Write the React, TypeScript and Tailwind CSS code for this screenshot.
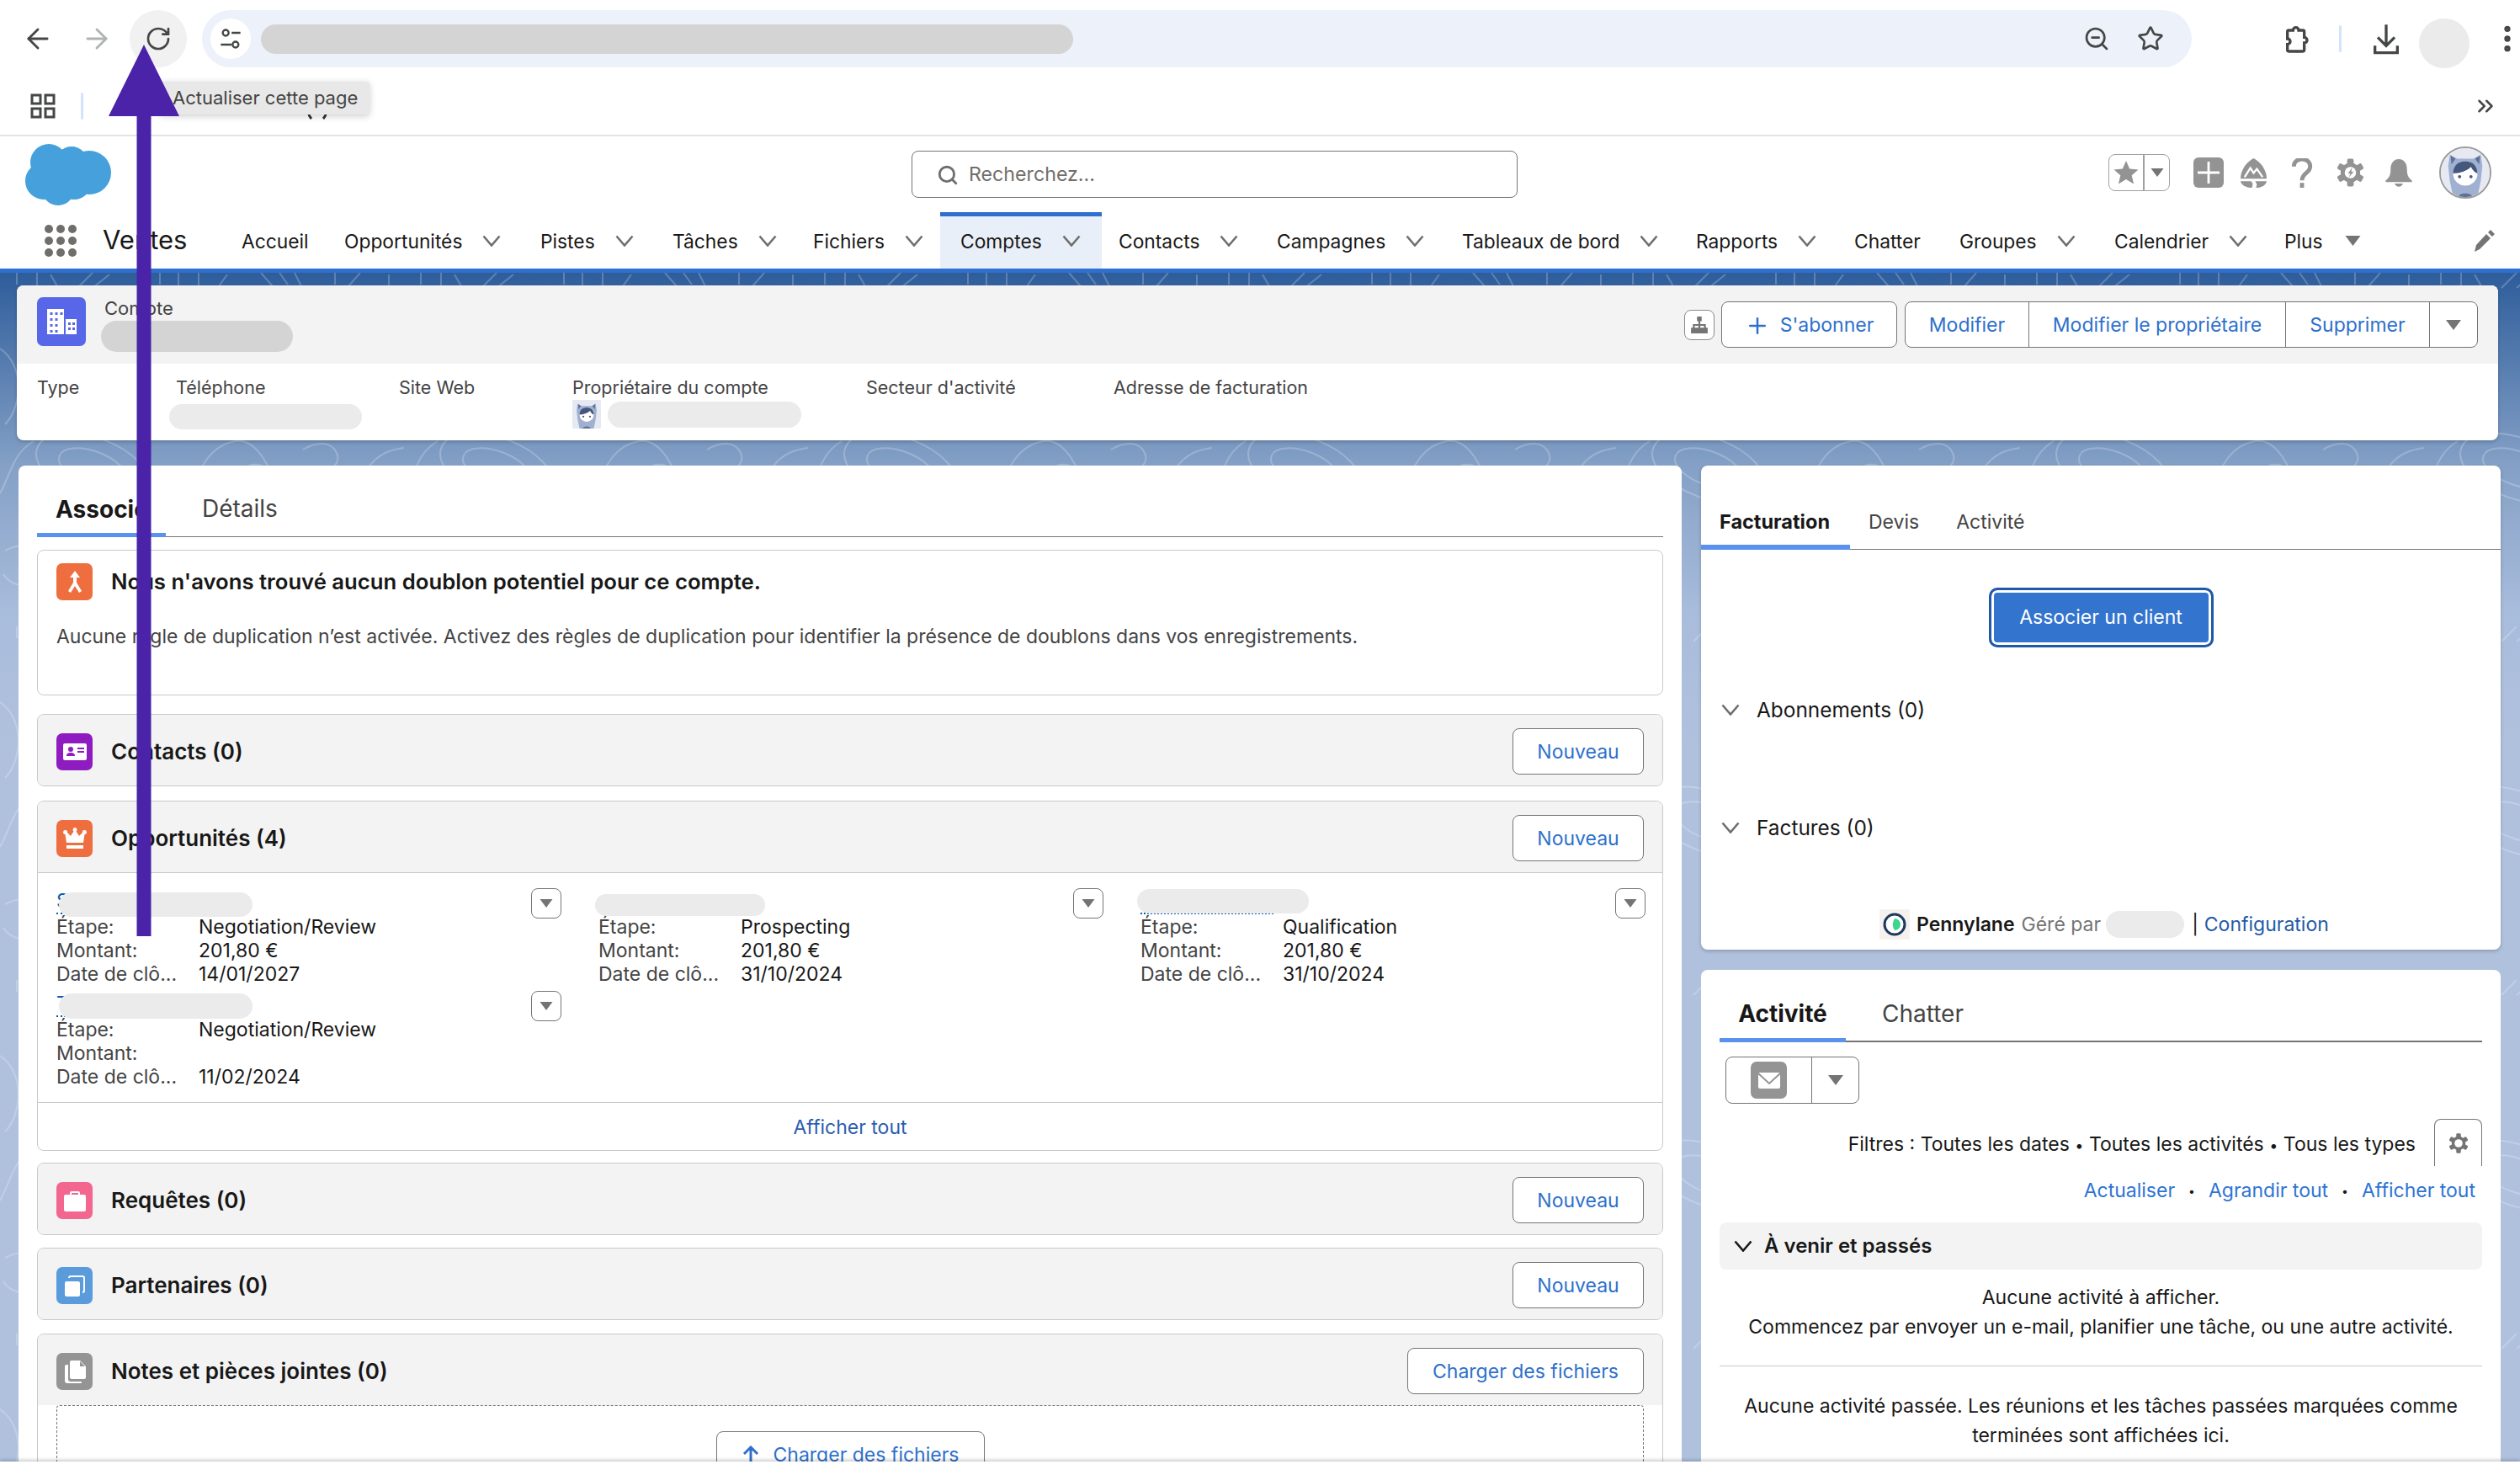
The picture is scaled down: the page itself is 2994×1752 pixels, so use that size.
import { ArrowLeft, ArrowRight, ChevronsRight, EllipsisVertical, Plus, RotateCw, Search, Star, ZoomOut } from 'lucide-react'
import type { ReactNode } from 'react'

const navItems = [
	{ label: 'Accueil', width: 'w-[122px]' },
	{ label: 'Opportunités', width: 'w-[233px]', chevron: true },
	{ label: 'Pistes', width: 'w-[157px]', chevron: true },
	{ label: 'Tâches', width: 'w-[167px]', chevron: true },
	{ label: 'Fichiers', width: 'w-[175px]', chevron: true },
	{ label: 'Comptes', width: 'w-[188px]', chevron: true, active: true },
	{ label: 'Contacts', width: 'w-[188px]', chevron: true },
	{ label: 'Campagnes', width: 'w-[220px]', chevron: true },
	{ label: 'Tableaux de bord', width: 'w-[278px]', chevron: true },
	{ label: 'Rapports', width: 'w-[188px]', chevron: true },
	{ label: 'Chatter', width: 'w-[125px]' },
	{ label: 'Groupes', width: 'w-[184px]', chevron: true },
	{ label: 'Calendrier', width: 'w-[202px]', chevron: true },
]

function Chevron({ color = '#706e6b' }: { color?: string }) {
	return (
		<svg viewBox="0 0 22 14" className="h-[14px] w-[22px]" fill="none" stroke={color} strokeWidth="2.6">
			<path d="M1.5 1.5 11 12.5 20.5 1.5" />
		</svg>
	)
}

function Caret({ className = 'h-[12px] w-[18px]' }: { className?: string }) {
	return (
		<svg viewBox="0 0 18 12" className={className} fill="#747474">
			<path d="M0 0h18L9 12z" />
		</svg>
	)
}

function Gear({ className, color, children }: { className: string; color: string; children?: ReactNode }) {
	return (
		<svg viewBox="0 0 32 34" className={className}>
			<g fill={color}>
				<circle cx="16" cy="17" r="12" />
				{[0, 60, 120, 180, 240, 300].map((angle) => (
					<rect key={angle} x="12" y="0" width="8" height="10" rx="2" transform={`rotate(${angle} 16 17)`} />
				))}
			</g>
			<circle cx="16" cy="17" r="7" fill="#fff" />
			{children}
		</svg>
	)
}

function Cloud() {
	return (
		<svg viewBox="0 0 104 73" className="h-[73px] w-[104px]" fill="#45a0dc">
			<circle cx="30" cy="22" r="22" />
			<circle cx="57" cy="22" r="19" />
			<circle cx="78" cy="34" r="26" />
			<circle cx="24" cy="44" r="22" />
			<circle cx="41" cy="54" r="19" />
			<circle cx="60" cy="46" r="20" />
		</svg>
	)
}

function AppDots() {
	return (
		<svg viewBox="0 0 38 38" className="h-[38px] w-[38px]" fill="#706e6b">
			{[5, 19, 33].flatMap((y) =>
				[5, 19, 33].map((x) => <circle key={`${x}-${y}`} cx={x} cy={y} r="5" />)
			)}
		</svg>
	)
}

function Astro({ className }: { className: string }) {
	return (
		<svg viewBox="0 0 60 60" className={className}>
			<rect width="60" height="60" fill="#e6e9f2" />
			<path d="M11 8l9 5h20l9-5 2 14-2 18-4 20H15l-4-20-2-18z" fill="#9fb0d0" />
			<path d="M12 9l6 4-5 7zM48 9l-6 4 5 7z" fill="#5f7196" />
			<circle cx="30" cy="31" r="15" fill="#fff" />
			<path d="M15 31c0-10 7-15 15-15s15 5 15 15c-3-1-6-4-8-8-5 5-14 8-22 8z" fill="#45577d" />
			<circle cx="23" cy="35" r="2" fill="#45577d" />
			<circle cx="37" cy="35" r="2" fill="#45577d" />
			<path d="M21 60c2-6 16-6 18 0z" fill="#5f7196" />
		</svg>
	)
}

function UtilityIcons() {
	return (
		<div className="flex items-center">
			<div className="flex h-[44px] w-[73px] items-center rounded-[8px] border border-[#a0a0a0]">
				<svg viewBox="0 0 30 30" className="ml-[5px] h-[30px] w-[30px]" fill="#939393">
					<path d="M15 1l4.2 9.4 10.3 1-7.8 6.8 2.4 10.2L15 23l-9.1 5.4 2.4-10.2L.5 11.4l10.3-1z" />
				</svg>
				<div className="ml-[5px] h-full w-[2px] bg-[#a0a0a0]" />
				<Caret className="ml-[7px] h-[10px] w-[16px]" />
			</div>
			<div className="ml-[28px] flex h-[36px] w-[36px] items-center justify-center rounded-[6px] bg-[#939393]">
				<svg viewBox="0 0 24 24" className="h-[26px] w-[26px]" stroke="#fff" strokeWidth="2.6">
					<path d="M12 0v24M0 12h24" />
				</svg>
			</div>
			<svg viewBox="0 0 36 36" className="ml-[18px] h-[35px] w-[35px]" fill="#939393">
				<path d="M18 0C26 4 34 14 34 25H2C2 14 10 4 18 0z" />
				<path d="M7 23l7-11 4 6 4-5 7 10" fill="none" stroke="#fff" strokeWidth="2.4" />
				<path d="M2 28h13l2 3-1 5C9 36 3 33 2 28zM20 28h14c-1 5-6 8-13 8l1-4z" />
			</svg>
			<svg viewBox="0 0 26 36" className="ml-[27px] h-[35px] w-[26px]" fill="none" stroke="#939393" strokeWidth="5">
				<path d="M3 10c0-12 20-12 20 0 0 8-10 8-10 17" />
				<path d="M13 30v6" />
			</svg>
			<Gear className="ml-[29px] h-[34px] w-[31px]" color="#939393">
				<path d="M18 11l-5 7h3l-2 5 6-7h-3z" fill="#939393" />
			</Gear>
			<svg viewBox="0 0 34 34" className="ml-[25px] h-[33px] w-[34px]" fill="#939393">
				<path d="M17 0c7 0 10 6 10 12 0 8 2 11 6 14v2H1v-2c4-3 6-6 6-14C7 6 10 0 17 0z" />
				<path d="M12 30h10c-1 5-9 5-10 0z" />
			</svg>
			<div className="ml-[31px] h-[62px] w-[62px] overflow-hidden rounded-full border-2 border-[#9a9a9a]">
				<Astro className="h-full w-full" />
			</div>
		</div>
	)
}

function Contours() {
	return (
		<svg className="absolute top-0 left-0 h-full w-full" fill="none">
			<defs>
				<pattern id="topo" width="480" height="420" patternUnits="userSpaceOnUse">
					<g stroke="#fff" strokeOpacity="0.22" strokeWidth="2">
						<path d="M20 0v14M44 0v20M60 2l8 14M110 0l-18 18M130 2l-20 16M190 0v14M212 0v16M236 0v18M270 2l-10 14M310 0l14 16M332 0l10 14M350 0l8 16M398 0v14M428 0l-14 16M462 2v14" />
						<ellipse cx="110" cy="232" rx="70" ry="36" transform="rotate(20 110 232)" />
						<ellipse cx="110" cy="232" rx="42" ry="20" transform="rotate(20 110 232)" />
						<path d="M0 262c14-26 16-48 40-62M230 262c4-30 22-58 50-62 26-4 42 34 52 62M280 262c0-20 10-36 26-34 16 2 22 20 24 34M360 210c16-10 34-10 40 4 8 18-22 22-14 36M430 262c-4-20 12-50 50-54" />
						<path d="M0 90c30 20 26 70 6 90M474 60c-20 20-24 70-6 96M6 330c26-14 60-4 54 22-4 26-44 26-56 6M420 320c24-12 60 2 58 26-2 22-40 30-60 10" />
					</g>
				</pattern>
			</defs>
			<rect width="100%" height="100%" fill="url(#topo)" />
		</svg>
	)
}

function Pill({ className }: { className: string }) {
	return <div className={`rounded-full ${className}`} />
}

function AccountField({ label, width, children }: { label: string; width: string; children?: ReactNode }) {
	return (
		<div className={`flex flex-col ${width}`}>
			<span className="h-[28px] text-[21.5px] leading-[28px] text-[#444444]">{label}</span>
			{children}
		</div>
	)
}

function OutlineButton({ children, className = '' }: { children: ReactNode; className?: string }) {
	return (
		<div className={`flex h-[55px] items-center justify-center rounded-[8px] border border-[#747474] bg-white pt-[2px] text-[23px] text-[#2e70cc] ${className}`}>
			{children}
		</div>
	)
}

function RecordIcon({ color, children }: { color: string; children: ReactNode }) {
	return (
		<div className={`flex h-[44px] w-[43px] shrink-0 items-center justify-center rounded-[7px] ${color}`}>
			<svg viewBox="0 0 30 30" className="h-[30px] w-[30px]" fill="#fff">
				{children}
			</svg>
		</div>
	)
}

const contactIcon = (
	<path fillRule="evenodd" d="M3 5h24a2 2 0 0 1 2 2v16a2 2 0 0 1-2 2H3a2 2 0 0 1-2-2V7a2 2 0 0 1 2-2zm7 4a3 3 0 1 0 0 6 3 3 0 0 0 0-6zm-5 11h10c0-3-2-4-5-4s-5 1-5 4zm13-10v2h8v-2zm0 4v2h8v-2z" />
)
const crownIcon = (
	<path fillRule="evenodd" d="M15 2a2.5 2.5 0 0 1 1.5 4.5L20 12l4-4a2.5 2.5 0 1 1 2.5 2L25 20H5L3.5 10A2.5 2.5 0 1 1 6 8l4 4 3.5-5.5A2.5 2.5 0 0 1 15 2zM5 23h20v4H5z" />
)
const caseIcon = (
	<path fillRule="evenodd" d="M11 4h8a2 2 0 0 1 2 2v2h5a2 2 0 0 1 2 2v16a2 2 0 0 1-2 2H4a2 2 0 0 1-2-2V10a2 2 0 0 1 2-2h5V6a2 2 0 0 1 2-2zm0 2v2h8V6z" />
)
const partnerIcon = (
	<>
		<path d="M5 10h14a2 2 0 0 1 2 2v14a2 2 0 0 1-2 2H5a2 2 0 0 1-2-2V12a2 2 0 0 1 2-2z" />
		<path d="M10 3h14a3 3 0 0 1 3 3v15a3 3 0 0 1-3 3v-2a1 1 0 0 0 1-1V6a1 1 0 0 0-1-1H10a1 1 0 0 0-1 1H7a3 3 0 0 1 3-3z" />
	</>
)
const notesIcon = (
	<path fillRule="evenodd" d="M11 2h10l7 7v13a2 2 0 0 1-2 2H11a2 2 0 0 1-2-2V4a2 2 0 0 1 2-2zm10 1v6h6zM5 7h2v17a3 3 0 0 0 3 3h13v1a1 1 0 0 1-1 1H6a3 3 0 0 1-3-3V9a2 2 0 0 1 2-2z" />
)

function RelatedHeader({ icon, color, title, action }: { icon: ReactNode; color: string; title: string; action: ReactNode }) {
	return (
		<div className="flex h-[84px] items-center rounded-t-[8px] bg-[#f3f3f3] pt-[3px] pr-[22px] pl-[22px]">
			<RecordIcon color={color}>{icon}</RecordIcon>
			<span className="ml-[22px] text-[26px] font-semibold text-[#181818]">{title}</span>
			<div className="ml-auto">{action}</div>
		</div>
	)
}

function RelatedCard({ icon, color, title, margin }: { icon: ReactNode; color: string; title: string; margin: string }) {
	return (
		<div className={`overflow-hidden rounded-[8px] border border-[#c9c9c9] ${margin}`}>
			<RelatedHeader icon={icon} color={color} title={title} action={<OutlineButton className="w-[156px]">Nouveau</OutlineButton>} />
		</div>
	)
}

function Opportunity({ stage, amount, date, pill, peek, underline }: { stage: string; amount: string; date: string; pill: string; peek?: string; underline?: boolean }) {
	return (
		<div className="h-[122px] w-[600px]">
			<div className="flex h-[32px] items-start justify-between">
				<div className={`relative h-[31px] w-[158px] text-[23px] leading-[31px] text-[#0b5cab] ${underline ? 'border-b-2 border-dotted border-[#0b5cab]' : ''}`}>
					{peek && <span className="border-b-2 border-dotted border-[#0b5cab]">{peek}</span>}
					<Pill className={`absolute top-0 left-0 ${pill}`} />
				</div>
				<div className="flex h-[36px] w-[36px] items-center justify-center rounded-[8px] border border-[#747474] bg-white">
					<Caret className="h-[10px] w-[16px]" />
				</div>
			</div>
			{[
				['Étape:', stage],
				['Montant:', amount],
				['Date de clô...', date],
			].map(([label, value]) => (
				<div key={label} className="flex h-[28px] items-center text-[23px]">
					<span className="w-[169px] text-[#444444]">{label}</span>
					<span className="text-[#181818]">{value}</span>
				</div>
			))}
		</div>
	)
}

function LeftColumn() {
	return (
		<div className="h-[1300px] w-[1976px] rounded-t-[8px] bg-white px-[22px]">
			<div className="flex h-[85px] items-end border-b border-[#747474]">
				<div className="-mb-px flex h-[54px] w-[153px] items-start border-b-[5px] border-[#5a92ee] pl-[22px]">
					<span className="text-[28px] font-bold text-[#181818]">Associé</span>
				</div>
				<div className="flex h-[54px] items-start pl-[43px]">
					<span className="text-[28px] text-[#444444]">Détails</span>
				</div>
			</div>

			<div className="mt-[15px] h-[173px] rounded-[8px] border border-[#c9c9c9] px-[22px] pt-[15px]">
				<div className="flex items-center">
					<RecordIcon color="bg-[#ef6e3f]">
						<path d="M15 2l6 8h-4v6l6 10-3 2-5-8-5 8-3-2 6-10v-6H9z" />
					</RecordIcon>
					<span className="ml-[22px] text-[25.7px] font-semibold text-[#181818]">Nous n'avons trouvé aucun doublon potentiel pour ce compte.</span>
				</div>
				<p className="mt-[29px] text-[23px] leading-[28px] text-[#444444]">
					Aucune règle de duplication n’est activée. Activez des règles de duplication pour identifier la présence de doublons dans vos enregistrements.
				</p>
			</div>

			<RelatedCard icon={contactIcon} color="bg-[#8e1cc0]" title="Contacts (0)" margin="mt-[22px]" />

			<div className="mt-[17px] rounded-[8px] border border-[#c9c9c9]">
				<RelatedHeader
					icon={crownIcon}
					color="bg-[#ef6e3f]"
					title="Opportunités (4)"
					action={<OutlineButton className="w-[156px]">Nouveau</OutlineButton>}
				/>
				<div className="grid grid-cols-[644px_644px_1fr] border-t border-[#c9c9c9] pt-[18px] pb-[10px] pl-[22px]">
					<Opportunity stage="Negotiation/Review" amount="201,80 €" date="14/01/2027" peek="S" pill="ml-[3px] mt-[5px] h-[29px] w-[230px] bg-[#ebebeb]" />
					<Opportunity stage="Prospecting" amount="201,80 €" date="31/10/2024" pill="-ml-[4px] mt-[7px] h-[26px] w-[202px] bg-[#ebebeb]" />
					<Opportunity stage="Qualification" amount="201,80 €" date="31/10/2024" pill="-ml-[4px] mt-[1px] h-[29px] w-[204px] bg-[#ebebeb]" underline />
					<Opportunity stage="Negotiation/Review" amount="" date="11/02/2024" peek="T" pill="ml-[3px] mt-[3px] h-[30px] w-[230px] bg-[#ebebeb]" />
				</div>
				<div className="flex h-[57px] items-center justify-center border-t border-[#c9c9c9] pt-[2px] text-[23px] text-[#2a5db0]">Afficher tout</div>
			</div>

			<RelatedCard icon={caseIcon} color="bg-[#f2668f]" title="Requêtes (0)" margin="mt-[14px]" />
			<RelatedCard icon={partnerIcon} color="bg-[#5a9bdc]" title="Partenaires (0)" margin="mt-[15px]" />

			<div className="mt-[16px] h-[300px] rounded-[8px] border border-[#c9c9c9]">
				<RelatedHeader
					icon={notesIcon}
					color="bg-[#949494]"
					title="Notes et pièces jointes (0)"
					action={<OutlineButton className="w-[281px]">Charger des fichiers</OutlineButton>}
				/>
				<div className="mx-[22px] h-[200px] rounded-t-[4px] border border-dashed border-[#747474] pt-[30px]">
					<OutlineButton className="mx-auto w-[319px] gap-[16px]">
						<svg viewBox="0 0 22 24" className="h-[24px] w-[22px]" fill="none" stroke="#2e70cc" strokeWidth="3">
							<path d="M11 23V3M3 10l8-8 8 8" />
						</svg>
						Charger des fichiers
					</OutlineButton>
				</div>
			</div>
		</div>
	)
}

function BillingCard() {
	return (
		<div className="flex h-[575px] w-[950px] flex-col rounded-[8px] bg-white shadow-[0_2px_4px_rgba(0,0,0,0.2)]">
			<div className="flex h-[100px] items-end border-b border-[#747474]">
				<div className="-mb-px flex h-[51px] w-[177px] items-start border-b-[6px] border-[#5a92ee] pl-[22px]">
					<span className="text-[23.5px] font-bold text-[#181818]">Facturation</span>
				</div>
				<div className="flex h-[49px] items-start gap-[44px] pl-[22px] text-[23px] text-[#444444]">
					<span>Devis</span>
					<span>Activité</span>
				</div>
			</div>
			<div className="mt-[45px] flex justify-center">
				<div className="flex h-[71px] w-[267px] items-center justify-center rounded-[10px] border-[3px] border-[#1f5aa8] bg-[#3274ce] text-[23px] text-white shadow-[inset_0_0_0_3px_#ffffff]">
					Associer un client
				</div>
			</div>
			<div className="mt-[58px] flex h-[32px] items-center pl-[24px] text-[24.4px] text-[#181818]">
				<Chevron />
				<span className="ml-[20px]">Abonnements (0)</span>
			</div>
			<div className="mt-[108px] flex h-[32px] items-center pl-[24px] text-[24.4px] text-[#181818]">
				<Chevron />
				<span className="ml-[20px]">Factures (0)</span>
			</div>
			<div className="mt-[81px] flex h-[36px] items-center pl-[212px] text-[23px]">
				<svg viewBox="0 0 36 36" className="h-[36px] w-[36px]">
					<rect width="36" height="36" fill="#f5f2ee" />
					<circle cx="18" cy="18" r="12" fill="#fff" stroke="#1f3a5f" strokeWidth="3" />
					<path d="M18 11a7 7 0 0 1 0 14 12 12 0 0 1 0-14z" fill="#3ed68c" />
				</svg>
				<span className="ml-[8px] font-semibold text-[#181818]">Pennylane</span>
				<span className="ml-[8px] text-[#747474]">Géré par</span>
				<Pill className="ml-[6px] h-[32px] w-[93px] bg-[#ebebeb]" />
				<span className="ml-[9px] text-[#181818]">|</span>
				<span className="ml-[7px] text-[#1f5aa8]">Configuration</span>
			</div>
		</div>
	)
}

function ActivityCard() {
	return (
		<div className="mt-[24px] h-[600px] w-[950px] rounded-t-[8px] bg-white px-[22px] text-[23px] text-[#181818]">
			<div className="flex h-[86px] items-end border-b-2 border-[#747474]">
				<div className="-mb-[2px] flex h-[55px] w-[150px] items-start justify-center border-b-[5px] border-[#5a92ee]">
					<span className="text-[28px] font-bold">Activité</span>
				</div>
				<div className="flex h-[53px] items-start pl-[43px]">
					<span className="text-[28px] text-[#444444]">Chatter</span>
				</div>
			</div>
			<div className="mt-[17px] ml-[7px] flex h-[56px] w-[159px] items-center rounded-[8px] border border-[#747474]">
				<div className="ml-[29px] flex h-[44px] w-[43px] items-center justify-center rounded-[7px] bg-[#949494]">
					<svg viewBox="0 0 30 30" className="h-[30px] w-[30px]">
						<rect x="2" y="6" width="26" height="19" rx="2" fill="#fff" />
						<path d="M2 7l13 12L28 7" fill="none" stroke="#949494" strokeWidth="2" />
					</svg>
				</div>
				<div className="ml-[29px] h-full w-px bg-[#747474]" />
				<Caret className="ml-[19px] h-[12px] w-[18px]" />
			</div>
			<div className="mt-[18px] flex h-[56px] items-center justify-end">
				<span className="pt-[4px]">
					Filtres : Toutes les dates <span className="text-[18px]">•</span> Toutes les activités <span className="text-[18px]">•</span> Tous les types
				</span>
				<div className="ml-[22px] flex h-[56px] w-[57px] items-center justify-center rounded-t-[8px] border border-b-0 border-[#747474]">
					<Gear className="h-[24px] w-[22px]" color="#747474" />
				</div>
			</div>
			<div className="mt-[14px] flex h-[30px] items-center justify-end gap-[16px] pr-[8px] text-[#2e74d4]">
				<span>Actualiser</span>
				<span className="text-[14px] text-[#181818]">•</span>
				<span>Agrandir tout</span>
				<span className="text-[14px] text-[#181818]">•</span>
				<span>Afficher tout</span>
			</div>
			<div className="mt-[23px] flex h-[56px] items-center rounded-[8px] bg-[#f3f3f3] pl-[17px] text-[24px] font-semibold">
				<Chevron color="#181818" />
				<span className="ml-[14px]">À venir et passés</span>
			</div>
			<div className="mt-[16px] border-b border-[#c9c9c9] pb-[28px] text-center leading-[35px]">
				<p>Aucune activité à afficher.</p>
				<p>Commencez par envoyer un e-mail, planifier une tâche, ou une autre activité.</p>
			</div>
			<p className="mt-[30px] px-[16px] text-center leading-[35px]">
				Aucune activité passée. Les réunions et les tâches passées marquées comme terminées sont affichées ici.
			</p>
		</div>
	)
}

export default function App() {
	return (
		<div className="relative flex h-[1752px] w-[2994px] flex-col overflow-hidden bg-white font-['Inter',sans-serif]">
			{/* browser toolbar */}
			<div className="h-[162px] shrink-0 border-b-2 border-[#e3e3e3]">
				<div className="flex h-[92px] items-start pt-[12px] [&>*]:shrink-0">
					<ArrowLeft className="mt-[15px] ml-[26px] h-[38px] w-[38px] text-[#444746]" strokeWidth={1.8} />
					<ArrowRight className="mt-[15px] ml-[32px] h-[38px] w-[38px] text-[#b0b2b4]" strokeWidth={1.8} />
					<div className="ml-[20px] flex h-[68px] w-[68px] items-center justify-center rounded-full bg-[#f1f1f1]">
						<RotateCw className="h-[32px] w-[32px] text-[#444746]" strokeWidth={2} />
					</div>
					<div className="ml-[18px] flex h-[68px] w-[2364px] items-center rounded-full bg-[#edf2fa] pl-[10px]">
						<div className="flex h-[48px] w-[48px] items-center justify-center rounded-full bg-white">
							<svg viewBox="0 0 24 24" className="h-[28px] w-[28px]" fill="none" stroke="#444746" strokeWidth="2">
								<circle cx="7" cy="6" r="3" />
								<circle cx="17" cy="18" r="3" />
								<path d="M13 6h9M2 18h11" />
							</svg>
						</div>
						<Pill className="ml-[12px] h-[35px] w-[965px] bg-[#d4d4d4]" />
						<ZoomOut className="ml-[1200px] h-[32px] w-[32px] text-[#444746]" strokeWidth={2} />
						<Star className="ml-[32px] h-[32px] w-[32px] text-[#444746]" strokeWidth={2} />
					</div>
					<svg viewBox="0 0 24 24" className="mt-[14px] ml-[102px] h-[40px] w-[40px]" fill="none" stroke="#444746" strokeWidth="2">
						<path d="M8 6h3a2 2 0 0 1 4 0h3a1 1 0 0 1 1 1v4a2 2 0 0 1 0 4v5a1 1 0 0 1-1 1H8a1 1 0 0 1-1-1v-4a2 2 0 0 0 0-4V7a1 1 0 0 1 1-1z" />
					</svg>
					<div className="mt-[18px] ml-[33px] h-[32px] w-[3px] rounded-full bg-[#d3e3fd]" />
					<svg viewBox="0 0 24 24" className="mt-[14px] ml-[33px] h-[40px] w-[40px]" fill="none" stroke="#444746" strokeWidth="2">
						<path d="M12 2v15M6 11l6 6 6-6M4 17v5h16v-5" />
					</svg>
					<Pill className="mt-[10px] ml-[19px] h-[59px] w-[60px] bg-[#ebebeb]" />
					<EllipsisVertical className="mt-[14px] ml-[25px] h-[40px] w-[40px] text-[#444746]" strokeWidth={2.4} />
				</div>
				<div className="flex h-[68px] items-center pr-[26px] pl-[36px]">
					<svg viewBox="0 0 30 30" className="h-[30px] w-[30px]" fill="none" stroke="#444746" strokeWidth="3">
						<rect x="2" y="2" width="10" height="10" />
						<rect x="18" y="2" width="10" height="10" />
						<rect x="2" y="18" width="10" height="10" />
						<rect x="18" y="18" width="10" height="10" />
					</svg>
					<div className="ml-[30px] h-[32px] w-[3px] rounded-full bg-[#d3e3fd]" />
					<ChevronsRight className="ml-auto h-[30px] w-[30px] text-[#444746]" strokeWidth={2} />
				</div>
			</div>

			{/* salesforce header */}
			<div className="flex h-[90px] shrink-0 items-start bg-white">
				<div className="mt-[9px] ml-[28px]">
					<Cloud />
				</div>
				<div className="mt-[17px] ml-[951px] flex h-[56px] w-[720px] items-center rounded-[8px] border border-[#747474] pt-[1px] pl-[29px] text-[23.2px] text-[#706e6b]">
					<Search className="h-[26px] w-[26px]" strokeWidth={2.6} />
					<span className="ml-[12px]">Recherchez...</span>
				</div>
				<div className="mt-[12px] ml-auto pr-[34px]">
					<UtilityIcons />
				</div>
			</div>

			{/* app nav */}
			<div className="flex h-[72px] shrink-0 items-center border-b-[5px] border-[#2f6fcf] pl-[53px]">
				<AppDots />
				<span className="ml-[31px] w-[165px] text-[31px] text-[#181818]">Ventes</span>
				{navItems.map((item) => (
					<div key={item.label} className={`relative flex h-full items-center ${item.width}`}>
						{item.active && <div className="absolute top-0 bottom-0 -left-[24px] w-[192px] border-t-[5px] border-[#2f6fcf] bg-[#e9eff9]" />}
						<span className="relative mt-[3px] text-[22.8px] text-[#181818]">{item.label}</span>
						{item.chevron && (
							<span className="relative ml-[24px]">
								<Chevron />
							</span>
						)}
					</div>
				))}
				<span className="mt-[3px] text-[22.8px] text-[#181818]">Plus</span>
				<Caret className="ml-[26px] h-[12px] w-[19px]" />
				<svg viewBox="0 0 26 28" className="ml-[134px] h-[28px] w-[26px]" fill="#747474">
					<path d="M20 1l5 5-3 3-5-5zM15 6l5 5L7 24l-6 3 2-8z" />
				</svg>
			</div>

			{/* page */}
			<div className="relative flex-1 overflow-hidden bg-[linear-gradient(180deg,#2e5d9b_0px,#84a0c6_229px,#a8bcdb_400px,#b0c1de_560px)] pt-[15px]">
				<Contours />
				<div className="relative ml-[20px] h-[184px] w-[2948px] overflow-hidden rounded-[8px] bg-white shadow-[0_2px_4px_rgba(0,0,0,0.2)]">
					<div className="flex h-[93px] items-start bg-[#f3f3f3] pl-[24px]">
						<div className="mt-[14px] flex h-[58px] w-[58px] items-center justify-center rounded-[7px] bg-[#5867e8]">
							<svg viewBox="0 0 36 30" className="h-[36px] w-[36px]" fill="#fff">
								<path fillRule="evenodd" d="M1 0h20v30H1zM4.5 4v3h3V4zm6 0v3h3V4zm6 0v3h3V4zM4.5 11v3h3v-3zm6 0v3h3v-3zM4.5 18v3h3v-3zm6 0v3h3v-3zM4.5 25v3h3v-3zm6 0v3h3v-3z" />
								<path fillRule="evenodd" d="M23 12h13v18H23zm3 4v3h3v-3zm5 0v3h3v-3zm-5 6v3h3v-3zm5 0v3h3v-3z" />
							</svg>
						</div>
						<div className="ml-[18px] flex flex-col">
							<span className="mt-[13px] h-[28px] pl-[4px] text-[22px] leading-[28px] text-[#444444]">Compte</span>
							<Pill className="mt-px h-[37px] w-[228px] bg-[#d4d4d4]" />
						</div>
						<div className="ml-auto flex items-center pt-[19px] pr-[24px]">
							<div className="flex h-[36px] w-[36px] items-center justify-center rounded-[8px] border border-[#8a8a8a] bg-white">
								<svg viewBox="0 0 20 20" className="h-[22px] w-[22px]" fill="#747474">
									<path d="M7.5 1h5v5H11v3h6v4h2v6h-6v-6h2v-2h-4v2h2v6H7v-6h2v-2H5v2h2v6H1v-6h2V9h6V6H7.5z" />
								</svg>
							</div>
							<OutlineButton className="ml-[8px] w-[209px] gap-[12px]">
								<Plus className="h-[30px] w-[30px]" strokeWidth={2} />
								S'abonner
							</OutlineButton>
							<div className="ml-[9px] flex h-[55px] w-[681px] items-center rounded-[8px] border border-[#747474] bg-white text-[23px] text-[#2e70cc]">
								<span className="flex h-full w-[147px] items-center justify-center border-r border-[#747474] pt-[2px]">Modifier</span>
								<span className="flex h-full w-[305px] items-center justify-center border-r border-[#747474] pt-[2px]">Modifier le propriétaire</span>
								<span className="flex h-full w-[171px] items-center justify-center border-r border-[#747474] pt-[2px]">Supprimer</span>
								<span className="flex h-full flex-1 items-center justify-center">
									<Caret />
								</span>
							</div>
						</div>
					</div>
					<div className="flex pt-[14px] pl-[24px]">
						<AccountField label="Type" width="w-[165px]" />
						<AccountField label="Téléphone" width="w-[265px]">
							<Pill className="-ml-[8px] mt-[6px] h-[30px] w-[229px] bg-[#ebebeb]" />
						</AccountField>
						<AccountField label="Site Web" width="w-[206px]" />
						<AccountField label="Propriétaire du compte" width="w-[349px]">
							<div className="flex items-center">
								<Astro className="h-[36px] w-[34px] rounded-[3px]" />
								<Pill className="ml-[8px] h-[31px] w-[230px] bg-[#ebebeb]" />
							</div>
						</AccountField>
						<AccountField label="Secteur d'activité" width="w-[294px]" />
						<AccountField label="Adresse de facturation" width="w-[300px]" />
					</div>
				</div>
				<div className="relative mt-[30px] ml-[22px] flex">
					<LeftColumn />
					<div className="ml-[23px] flex flex-col">
						<BillingCard />
						<ActivityCard />
					</div>
				</div>
			</div>
			<div className="relative h-[16px] shrink-0 bg-white shadow-[0_-2px_4px_rgba(0,0,0,0.2)]" />

			{/* bits of the bookmark label showing under the tooltip */}
			<svg viewBox="0 0 34 12" className="absolute top-[130px] left-[360px] h-[12px] w-[34px]" fill="none" stroke="#333" strokeWidth="3">
				<path d="M8 1c-2 3-1 7 2 10M26 1c2 3 1 7-2 10" />
			</svg>

			{/* tooltip */}
			<div className="absolute top-[97px] left-[190px] flex h-[39px] items-center rounded-[3px] bg-[#e8e8e8] pr-[14px] pl-[15px] text-[22px] text-[#444444] shadow-[0_2px_8px_rgba(0,0,0,0.2)]">
				Actualiser cette page
			</div>

			{/* annotation arrow */}
			<svg viewBox="0 0 84 1059" className="absolute top-[53px] left-[129px] h-[1059px] w-[84px]" fill="#4a23a8">
				<path d="M42 0 84 85H50.5V1059H33.5V85H0z" />
			</svg>
		</div>
	)
}
